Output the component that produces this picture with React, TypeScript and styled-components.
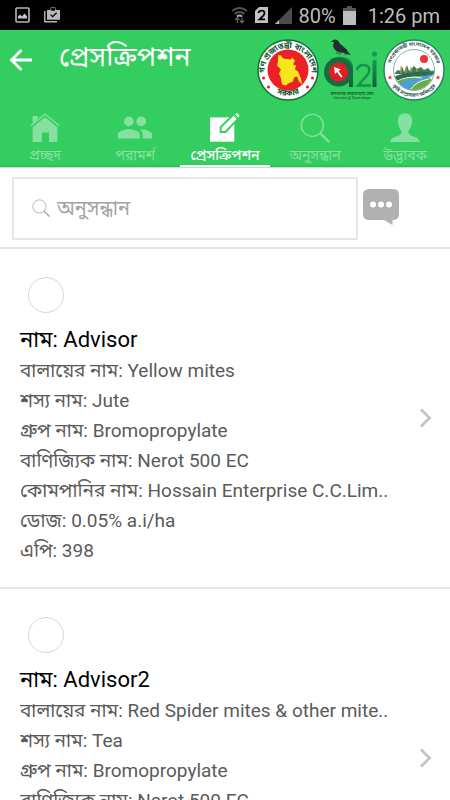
import React from 'react';
import styled, { createGlobalStyle } from 'styled-components';

const Global = createGlobalStyle`
  *, *::before, *::after { box-sizing: border-box; }
  body { margin: 0; background: #fff; font-family: Roboto, "Noto Sans Bengali", "Noto Sans", sans-serif; }
  button, input { font: inherit; }
`;

const Screen = styled.div`
  display: flex;
  flex-direction: column;
  height: 100vh;
  overflow: hidden;
  background: #fff;
`;

const StatusBar = styled.div`
  display: flex;
  flex: none;
  align-items: center;
  justify-content: space-between;
  height: 30px;
  padding: 0 10px 0 15px;
  background: #000;
  color: #bdbdbd;
  font-size: 20px;
  line-height: 30px;
`;

const StatusGroup = styled.div<{ $gap: number }>`
  display: flex;
  align-items: center;
  gap: ${(p) => p.$gap}px;
`;

const Percent = styled.span`
  margin-top: 2px;
`;

const Clock = styled.span`
  margin: 2px 0 0 5px;
`;

const Header = styled.header`
  flex: none;
  background: #34cd60;
  color: #fff;
`;

const TitleRow = styled.div`
  display: flex;
  align-items: flex-start;
  height: 78px;
  padding: 9px 5px 0 8px;
`;

const BackButton = styled.button`
  display: flex;
  padding: 8px 0;
  border: 0;
  background: none;
  color: #fff;
  cursor: pointer;
`;

const Title = styled.h1`
  flex: 1;
  margin: 0 0 0 25px;
  font-size: 27px;
  font-weight: 400;
  line-height: 36px;
  white-space: nowrap;
`;

const Logos = styled.div`
  display: flex;
  gap: 4px;
`;

const Tabs = styled.nav`
  display: flex;
  height: 60px;
  border-bottom: 1px solid #c8dccd;
`;

const Tab = styled.button<{ $active?: boolean }>`
  display: flex;
  flex: 1;
  flex-direction: column;
  align-items: center;
  gap: 2px;
  min-width: 0;
  padding: 5px 0 0;
  border: 0;
  border-bottom: 2px solid ${(p) => (p.$active ? '#fff' : '#2bc556')};
  background: none;
  color: ${(p) => (p.$active ? '#fff' : '#86e1a0')};
  font-size: 14px;
  font-weight: ${(p) => (p.$active ? 500 : 400)};
  line-height: 20px;
  white-space: nowrap;
  cursor: pointer;
`;

const SearchBar = styled.form`
  display: flex;
  flex: none;
  align-items: flex-start;
  gap: 5px;
  height: 81px;
  padding: 9px 51px 0 12px;
  border-bottom: 2px solid #e6e6e6;
`;

const SearchBox = styled.label`
  display: flex;
  flex: 1;
  align-items: center;
  gap: 7px;
  height: 63px;
  min-width: 0;
  padding: 0 18px 2px;
  border: 2px solid #e6e6e6;
  color: #a4a4a4;
`;

const SearchInput = styled.input`
  flex: 1;
  min-width: 0;
  padding: 0;
  border: 0;
  outline: 0;
  background: none;
  color: #555;
  font-size: 20px;
  line-height: 30px;
  &::placeholder { color: #a4a4a4; opacity: 1; }
`;

const ChatButton = styled.button`
  display: flex;
  margin-top: 12px;
  padding: 0;
  border: 0;
  background: none;
  cursor: pointer;
`;

const List = styled.ul`
  flex: 1;
  min-height: 0;
  margin: 0;
  padding: 0;
  overflow-y: auto;
  scrollbar-width: none;
  list-style: none;
`;

const Item = styled.li`
  display: flex;
  align-items: center;
  height: 340px;
  padding: 0 18px 0 20px;
  border-bottom: 2px solid #e6e6e6;
`;

const Details = styled.div`
  flex: 1;
  min-width: 0;
  padding-top: 6px;
`;

const Avatar = styled.div`
  width: 36px;
  height: 36px;
  margin: 0 0 11px 8px;
  border: 1px solid #d6d6d6;
  border-radius: 50%;
`;

const Name = styled.h2`
  margin: 0;
  color: #000;
  font-size: 22px;
  font-weight: 400;
  line-height: 32px;
`;

const Line = styled.p`
  margin: 0;
  overflow: hidden;
  color: #5a5a5a;
  font-size: 19px;
  line-height: 30px;
  white-space: nowrap;
`;

const PictureIcon = () => (
  <svg width="15" height="16" viewBox="0 0 15 16" aria-hidden="true">
    <rect x="1" y="1" width="13" height="14" rx="1" fill="none" stroke="#b8b8b8" strokeWidth="1.6" />
    <path d="M3 11.5V9.6l2-2 2 2 2.400-3L12 9.300v2.200z" fill="#c8c8c8" />
  </svg>
);

const CheckBagIcon = () => (
  <svg width="16" height="16" viewBox="0 0 16 16" aria-hidden="true">
    <path d="M.8 4v10.800H13" fill="none" stroke="#b8b8b8" strokeWidth="1.4" />
    <path d="M3 3h3.500V1.200Q6.500.3 7.400.3h3.300Q11.600.3 11.600 1.200V3H16v9.800H3z" fill="#b8b8b8" />
    <path d="M7.800 1.500h2.600V3H7.800zM6.500 7.600l2.100 2.100 4-4" fill="none" stroke="#000" strokeWidth="1.3" />
  </svg>
);

const WifiIcon = () => (
  <svg width="17" height="18" viewBox="0 0 17 18" fill="none" aria-hidden="true">
    <path d="M1 5Q8.500-1 16 5M3.500 8Q8.500 4 13.500 8" stroke="#555" strokeWidth="1.8" />
    <path d="M5.800 10.500Q8.500 8.500 11.200 10.500" stroke="#aaa" strokeWidth="1.8" />
    <path d="M6.300 17v-5M4.300 14l2-2.400 2 2.400M11 11.500v5M9 14.500l2 2.400 2-2.400" stroke="#666" strokeWidth="1.2" />
  </svg>
);

const SimIcon = () => (
  <svg width="13" height="16" viewBox="0 0 13 16" aria-hidden="true">
    <path d="M4 0h9v16H0V4z" fill="#c2c2c2" />
    <path d="M3.500 6Q3.800 3.700 6.600 3.700T9.500 6Q9.500 7.600 7.800 9.200L4.500 12.300H10" fill="none" stroke="#000" strokeWidth="1.8" />
  </svg>
);

const SignalIcon = () => (
  <svg width="17" height="17" viewBox="0 0 17 17" aria-hidden="true">
    <path d="M0 17L17 0v17z" fill="#4c4c4c" />
    <path d="M0 17l4-4v4z" fill="#bbb" />
  </svg>
);

const BatteryIcon = () => (
  <svg width="13" height="19" viewBox="0 0 13 19" aria-hidden="true">
    <path d="M4 0h5v2h4v4H0V2h4z" fill="#555" />
    <path d="M0 5h13v14H0z" fill="#bdbdbd" />
  </svg>
);

const BackIcon = () => (
  <svg width="26" height="26" viewBox="0 0 26 26" fill="none" aria-hidden="true">
    <path d="M24 13H4M13.500 3L3.500 13l10 10" stroke="#fff" strokeWidth="2.8" />
  </svg>
);

const HomeIcon = () => (
  <svg width="34" height="34" viewBox="0 0 34 34" aria-hidden="true">
    <path d="M1 14.500L17 1.200 33 14.500" fill="none" stroke="currentColor" strokeWidth="1.6" />
    <path d="M3 3.500h6v3L3 11.800zM17 4.600l14 11.500V33H21.500V22h-8v11H3V16.100z" fill="currentColor" />
  </svg>
);

const PeopleIcon = () => (
  <svg width="40" height="34" viewBox="0 0 40 34" aria-hidden="true">
    <circle cx="13" cy="9.500" r="5.500" fill="currentColor" />
    <circle cx="27" cy="9.500" r="5.500" fill="currentColor" />
    <path d="M.5 29v-4.200C.5 21 7 18.500 13 18.500s12.500 2.500 12.500 6.300V29zM25.800 18.700C32 18.500 39.500 20.800 39.500 24.700V29H28.800v-4.200c0-2.600-1.300-4.600-3-6.100z" fill="currentColor" />
  </svg>
);

const EditIcon = () => (
  <svg width="35" height="34" viewBox="0 0 35 34" aria-hidden="true">
    <path d="M0 5h27.500v27.500H0z" fill="#fff" />
    <path d="M12 21.500v-5.500L27.500.8l5 5L17.500 21.500z" fill="#fff" stroke="#34cd60" strokeWidth="2.2" />
    <path d="M27 3l4 4" stroke="#34cd60" strokeWidth="1.2" />
    <path d="M28.500 1.500l1-1q1-.8 2 .2l1.300 1.300q1 1 0 2l-1 1z" fill="#fff" />
  </svg>
);

const FindIcon = ({ size = 34 }: { size?: number }) => (
  <svg width={size} height={size} viewBox="0 0 34 34" fill="none" stroke="currentColor" aria-hidden="true">
    <circle cx="14" cy="14" r="12.500" strokeWidth="1.5" />
    <path d="M23 23l10 10" strokeWidth="2.6" />
  </svg>
);

const PersonIcon = () => (
  <svg width="34" height="34" viewBox="0 0 34 34" aria-hidden="true">
    <path d="M17 0.500c5.500 0 8 3 8 8.500 0 4.500-1.500 8-4 11v2.500c1 2.500 3 3.500 6.500 4.500 4 1.200 6 2.500 6 6H.5c0-3.500 2-4.800 6-6C10 26 12 25 13 22.500V20c-2.500-3-4-6.500-4-11C9 3.500 11.500.5 17 .5z" fill="currentColor" />
  </svg>
);

const ChatIcon = () => (
  <svg width="36" height="36" viewBox="0 0 36 36" aria-hidden="true">
    <path d="M6 0h24q6 0 6 6v19q0 6-6.500 6v5L21 31H6q-6 0-6-6V6q0-6 6-6z" fill="#b1b1b1" />
    <circle cx="10" cy="15.500" r="3" fill="#fff" />
    <circle cx="18" cy="15.500" r="3" fill="#fff" />
    <circle cx="26" cy="15.500" r="3" fill="#fff" />
  </svg>
);

const ChevronIcon = () => (
  <svg width="14" height="20" viewBox="0 0 14 20" fill="none" aria-hidden="true">
    <path d="M3 1.500l8.500 8.500L3 18.500" stroke="#c4c4c4" strokeWidth="2.8" />
  </svg>
);

const GovernmentSeal = () => (
  <svg width="62" height="62" viewBox="0 0 62 62" aria-label="গণপ্রজাতন্ত্রী বাংলাদেশ সরকার">
    <defs>
      <path id="seal-top" d="M8 36a23.300 23.300 0 1 1 46 0" />
      <path id="seal-bottom" d="M12 49a27.500 27.500 0 0 0 38 0" />
    </defs>
    <circle cx="31" cy="31" r="30" fill="#fff" stroke="#16733a" strokeWidth="1.6" />
    <circle cx="31" cy="31" r="20.500" fill="#ed2028" />
    <path d="M21 16l3 .5 2 3 8 1 1-2 3 3-2 4 3 1-1 4 3 2 3 7 1 6-3-3-2-5-3 1-1 4-5 2-2 2-4-1-1-6-2-5 2-4-4-4 1-4z" fill="#f6e71c" />
    <g fill="#14532d" fontSize="8" fontWeight="700">
      <text textAnchor="middle"><textPath href="#seal-top" startOffset="50%">গণ প্রজাতন্ত্রী বাংলাদেশ</textPath></text>
      <text textAnchor="middle"><textPath href="#seal-bottom" startOffset="50%">সরকার</textPath></text>
    </g>
    <g fill="#ed2028">
      <circle cx="6.500" cy="39" r="1.600" /><circle cx="11.500" cy="48" r="1.600" />
      <circle cx="55.500" cy="39" r="1.600" /><circle cx="50.500" cy="48" r="1.600" />
    </g>
  </svg>
);

const InnovationLogo = () => (
  <svg width="56" height="62" viewBox="0 0 56 62" aria-label="a2i">
    <defs>
      <linearGradient id="stem-shade" x1="0" y1="0" x2="0" y2="1">
        <stop offset="0" stopColor="#149a54" /><stop offset="1" stopColor="#145c3c" />
      </linearGradient>
    </defs>
    <path d="M10 1q4-1.500 6 2c2 4 8 6 9 10l3 3-5-1-2 1 1-2c-7 0-12-3-12-8l1-3-3 0z" fill="#242d32" />
    <path d="M13 14h3M18 14l-2 2" stroke="#303b3b" strokeWidth=".8" />
    <path d="M7 20Q20 15 27 21q3 3 3 8v19h-4V30z" fill="url(#stem-shade)" />
    <circle cx="15.500" cy="33" r="12" fill="#e01e26" stroke="#176b41" strokeWidth="5" />
    <path d="M11 28l7 2.500-2.500 1.500 4 5.500-1.500 1-4-5.500-2 2z" fill="#fff" />
    <path d="M34 31q1-5 6.500-5c6.500 0 7.500 6 3 11L35 46.500h13" fill="none" stroke="#16904f" strokeWidth="2.4" />
    <path d="M49.500 21h4v27h-4z" fill="url(#stem-shade)" />
    <circle cx="51.500" cy="15" r="2.600" fill="#139b57" />
    <text x="29" y="56" textAnchor="middle" fontSize="4" fontWeight="500" fill="#174f2d">জনগণের দোরগোড়ায় সেবা</text>
    <text x="29" y="60" textAnchor="middle" fontSize="4" fill="#26372d">Service @ Doorsteps</text>
  </svg>
);

const AgricultureSeal = () => (
  <svg width="62" height="62" viewBox="0 0 62 62" aria-label="কৃষি সম্প্রসারণ অধিদপ্তর">
    <defs>
      <path id="agri-top" d="M8 35a23.500 23.500 0 1 1 46 0" />
      <path id="agri-bottom" d="M8 45a27 27 0 0 0 46 0" />
      <clipPath id="agri-scene"><circle cx="31" cy="31" r="20" /></clipPath>
    </defs>
    <circle cx="31" cy="31" r="30" fill="#fff" stroke="#23865a" strokeWidth="1.4" />
    <circle cx="31" cy="31" r="20.500" fill="#fff" stroke="#6f9c88" strokeWidth=".8" />
    <g clipPath="url(#agri-scene)">
      <circle cx="41" cy="20" r="4" fill="#e8323c" />
      <path d="M12 34q3-5 5-2l2-5 2 6 3-7 2 6 5-5 3 3 4-2 3 3 4-2 3 3 6-1v4H12z" fill="#3e7d58" />
      <path d="M18 34v-7M23 34v-6M28 34v-6M34 34v-5" stroke="#c9a94b" strokeWidth="1.1" />
      <path d="M10 38q20-8 42-4l-6 4q-14-2-36 7z" fill="#2c6c54" />
      <path d="M10 45q16-10 34-8l8 6v12H10z" fill="#67ad50" />
      <path d="M14 48c6-9 16-7 24-10q6-2.500 15-3l-8 4c-9 3-17 5-20 14z" fill="#4a9fd8" />
      <path d="M12 43q13-7 27-4M28 50q5-8 18-10" fill="none" stroke="#fff" strokeWidth=".9" />
    </g>
    <g fill="#315f5b" fontSize="5" fontWeight="700">
      <text textAnchor="middle"><textPath href="#agri-top" startOffset="50%">গণপ্রজাতন্ত্রী বাংলাদেশ সরকার</textPath></text>
      <text textAnchor="middle"><textPath href="#agri-bottom" startOffset="50%">কৃষি সম্প্রসারণ অধিদপ্তর</textPath></text>
    </g>
    <path d="M7 36l.7 1.700h1.800L8 38.800l.6 1.800L7 39.500l-1.600 1.100.6-1.800-1.500-1.100h1.800zM55 36l.7 1.700h1.800L56 38.800l.6 1.800-1.600-1.100-1.600 1.100.6-1.800-1.500-1.100h1.800z" fill="#e8323c" />
  </svg>
);

const tabs = [
  { label: 'প্রচ্ছদ', icon: <HomeIcon /> },
  { label: 'পরামর্শ', icon: <PeopleIcon /> },
  { label: 'প্রেসক্রিপশন', icon: <EditIcon />, active: true },
  { label: 'অনুসন্ধান', icon: <FindIcon /> },
  { label: 'উদ্ভাবক', icon: <PersonIcon /> },
];

const prescriptions = [
  {
    name: 'Advisor',
    lines: [
      'বালায়ের নাম: Yellow mites',
      'শস্য নাম: Jute',
      'গ্রুপ নাম: Bromopropylate',
      'বাণিজ্যিক নাম: Nerot 500 EC',
      'কোমপানির নাম: Hossain Enterprise C.C.Lim..',
      'ডোজ: 0.05% a.i/ha',
      'এপি: 398',
    ],
  },
  {
    name: 'Advisor2',
    lines: [
      'বালায়ের নাম: Red Spider mites & other mite..',
      'শস্য নাম: Tea',
      'গ্রুপ নাম: Bromopropylate',
      'বাণিজ্যিক নাম: Nerot 500 EC',
      'কোমপানির নাম: Hossain Enterprise C.C.Lim..',
      'ডোজ: 0.05% a.i/ha',
      'এপি: 398',
    ],
  },
];

export default function App() {
  return (
    <Screen>
      <Global />
      <StatusBar>
        <StatusGroup $gap={14}>
          <PictureIcon />
          <CheckBagIcon />
        </StatusGroup>
        <StatusGroup $gap={7}>
          <WifiIcon />
          <SimIcon />
          <SignalIcon />
          <Percent>80%</Percent>
          <BatteryIcon />
          <Clock>1:26 pm</Clock>
        </StatusGroup>
      </StatusBar>
      <Header>
        <TitleRow>
          <BackButton type="button" aria-label="Back"><BackIcon /></BackButton>
          <Title>প্রেসক্রিপশন</Title>
          <Logos>
            <GovernmentSeal />
            <InnovationLogo />
            <AgricultureSeal />
          </Logos>
        </TitleRow>
        <Tabs>
          {tabs.map((tab) => (
            <Tab key={tab.label} type="button" $active={tab.active}>
              {tab.icon}
              <span>{tab.label}</span>
            </Tab>
          ))}
        </Tabs>
      </Header>
      <SearchBar>
        <SearchBox>
          <FindIcon size={18} />
          <SearchInput type="text" placeholder="অনুসন্ধান" aria-label="অনুসন্ধান" />
        </SearchBox>
        <ChatButton type="button" aria-label="Messages"><ChatIcon /></ChatButton>
      </SearchBar>
      <List>
        {prescriptions.map((entry) => (
          <Item key={entry.name}>
            <Details>
              <Avatar />
              <Name>নাম: {entry.name}</Name>
              {entry.lines.map((line) => (
                <Line key={line}>{line}</Line>
              ))}
            </Details>
            <ChevronIcon />
          </Item>
        ))}
      </List>
    </Screen>
  );
}
